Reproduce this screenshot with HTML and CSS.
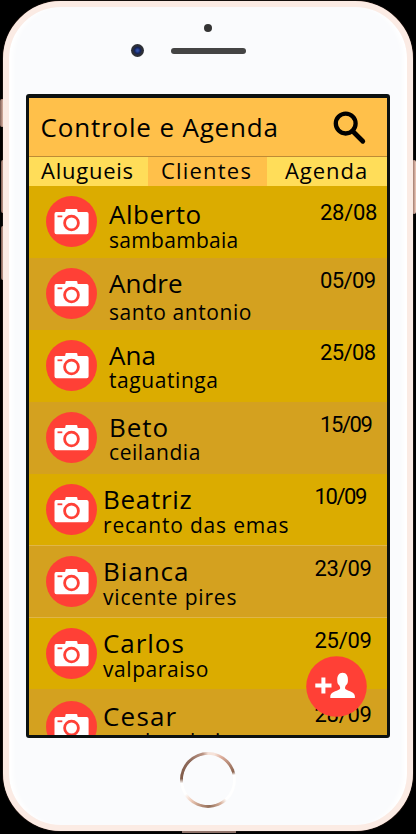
FILE: index.html
```html
<!DOCTYPE html>
<html lang="pt-BR">
<head>
<meta charset="utf-8">
<title>Controle e Agenda</title>
<link rel="stylesheet" href="styles.css">
</head>
<body>
<svg class="defs" width="0" height="0" aria-hidden="true">
  <symbol id="camera" viewBox="0 0 51 51">
    <circle cx="25.5" cy="25.5" r="25.5" fill="#ff4036"/>
    <path d="M10.2 16h8.300q.8 0 .9-1v-1q.1-1 1-1h10q.9 0 1 1v1q.1 1 .9 1h8.300q2 0 2 2v18.200q0 2-2 2H10.500q-2 0-2-2V18q0-2 1.700-2Z" fill="#fff"/>
    <circle cx="25.500" cy="27" r="6.900" fill="#fff" stroke="#ff4036" stroke-width="2.800"/>
    <path d="M11.500 20.300h4.800" stroke="#ff4036" stroke-width="1.800"/>
  </symbol>
</svg>
<div class="phone">
  <i class="side mute"></i><i class="side up"></i><i class="side down"></i><i class="side power"></i><i class="dock"></i>
  <div class="body">
    <i class="antenna tl"></i><i class="antenna tr"></i><i class="antenna bl"></i><i class="antenna br"></i>
    <div class="forehead">
      <i class="sensor"></i>
      <div class="earpiece"><i class="lens"></i><i class="speaker"></i></div>
    </div>
    <main class="screen">
      <header class="bar">
        <h1>Controle e Agenda</h1>
        <svg class="search" viewBox="0 0 34 34"><circle cx="12.700" cy="12.600" r="9.900" fill="none" stroke="#000" stroke-width="4.300"/><path d="m19.500 20 10.300 10.200" stroke="#000" stroke-width="4.800" stroke-linecap="round"/></svg>
      </header>
      <nav class="tabs">
        <a class="tab one">Alugueis</a><a class="tab two">Clientes</a><a class="tab three">Agenda</a>
      </nav>
      <ul class="list">
        <li class="row first"><svg class="avatar"><use href="#camera"/></svg><div class="info"><b class="s5">Alberto</b><small class="s3">sambambaia</small></div><time class="d3">28/08</time></li>
        <li class="row second"><svg class="avatar"><use href="#camera"/></svg><div class="info"><b>Andre</b><small class="s6">santo antonio</small></div><time class="d6">05/09</time></li>
        <li class="row"><svg class="avatar"><use href="#camera"/></svg><div class="info"><b>Ana</b><small class="s6">taguatinga</small></div><time class="d6">25/08</time></li>
        <li class="row"><svg class="avatar"><use href="#camera"/></svg><div class="info"><b class="s9">Beto</b><small class="s6">ceilandia</small></div><time class="d15">15/09</time></li>
        <li class="row near"><svg class="avatar"><use href="#camera"/></svg><div class="info"><b class="s7">Beatriz</b><small class="s8">recanto das emas</small></div><time class="d15">10/09</time></li>
        <li class="row near"><svg class="avatar"><use href="#camera"/></svg><div class="info"><b class="s9">Bianca</b><small class="s8">vicente pires</small></div><time class="d3">23/09</time></li>
        <li class="row near"><svg class="avatar"><use href="#camera"/></svg><div class="info"><b class="s9">Carlos</b><small class="s6">valparaiso</small></div><time class="d3">25/09</time></li>
        <li class="row near last"><svg class="avatar"><use href="#camera"/></svg><div class="info"><b class="s12">Cesar</b><small class="s3">sambambaia</small></div><time class="d3">28/09</time></li>
      </ul>
      <svg class="add" viewBox="0 0 61 61"><circle cx="30.500" cy="30.500" r="30.300" fill="#ff4036"/><path d="M9.300 29.500h16.200M17.400 21.500v16" stroke="#fff" stroke-width="4"/><path d="M24.300 42v-1.500c0-4.500 6-5 9.300-7.200 1-.7.500-2.500-.4-4-1.300-.6-2-2.600-1.900-4.200-.5-5.200 1.600-8.300 5.300-8.300s5.800 3.100 5.300 8.300c0 1.600-.7 3.600-2 4.200-.9 1.500-1.300 3.300-.3 4 3.400 2.200 9.300 2.700 9.300 7.200V42Z" fill="#fff"/></svg>
    </main>
    <div class="chin"><i class="home"></i></div>
  </div>
</div>
</body>
</html>
```

FILE: styles.css
```css
* { box-sizing: border-box; }
body { margin: 0; background: #000; color: #000; font-family: "Open Sans", sans-serif; }
.defs { position: absolute; }
.phone { position: relative; width: 416px; height: 834px; padding: 1px 3px 3px; overflow: hidden; }
.body { position: relative; height: 830px; border: 6px solid #fbebe4; border-radius: 58px; background: #fafbfd; box-shadow: inset 7px 0 5px -3px #fff, inset -7px 0 5px -3px #fff, 0 0 1px #c99684; overflow: hidden; }
.side { position: absolute; width: 4px; background: linear-gradient(90deg, #805e54, #f3cdbd); border-radius: 2px; }
.mute { left: 0; top: 99px; height: 28px; }
.up { left: 1px; top: 160px; height: 53px; }
.down { left: 1px; top: 226px; height: 54px; }
.power { right: 0; top: 160px; height: 54px; }
.dock { position: absolute; left: 182px; bottom: 1px; width: 54px; height: 3px; background: #8b7068; }
.antenna { position: absolute; width: 5px; height: 12px; background: #e2c0b0; }
.tl { left: -6px; top: 53px; }
.tr { right: -6px; top: 53px; }
.bl { left: -6px; top: 753px; }
.br { right: -6px; top: 753px; }
.forehead { height: 87px; padding: 17px 0 0 195px; }
.sensor { display: block; width: 8px; height: 8px; border-radius: 50%; background: #343434; }
.earpiece { display: flex; align-items: center; gap: 27px; height: 13px; margin: 12px 0 0 -73px; }
.lens { flex: none; width: 13px; height: 13px; border-radius: 50%; background: radial-gradient(circle, #3151aa 0 8%, #14235b 32%, #2b2e38 48%, #333 100%); }
.speaker { flex: none; width: 75px; height: 6px; border-radius: 3px; background: #444; }
.screen { position: relative; width: 364px; height: 644px; margin-left: 17px; border: 3px solid #0c1111; border-top-width: 4px; border-radius: 3px; background: #dbac00; overflow: hidden; }
.bar { display: flex; justify-content: space-between; height: 59px; padding: 0 20px 0 11.500px; background: #ffc04a; border-bottom: 1px solid #be8b35; }
h1 { margin: 0; font-size: 26px; line-height: 58px; font-weight: 400; letter-spacing: .83px; white-space: nowrap; }
.search { width: 34px; height: 34px; margin-top: 13px; }
.tabs { display: grid; grid-template-columns: 119px 119px 1fr; height: 29px; font-size: 22px; line-height: 27px; letter-spacing: .75px; background: #ffc04a; white-space: nowrap; }
.tab { padding-left: 12px; }
.one, .three { background: #ffdd59; }
.two { padding-left: 13px; letter-spacing: 1.200px; }
.three { padding-left: 18px; letter-spacing: .95px; }
.list { list-style: none; margin: 0; padding: 0; }
.row { display: flex; height: 71.900px; padding-left: 17px; background: #dbac00; }
.row:nth-child(even) { background: #d4a11f; }
.row.near:nth-child(n+6):not(.last) { box-shadow: inset 0 1px #e0b548; }
.avatar { flex: none; width: 51px; height: 51px; margin: 10.200px 12px 0 0; }
.near .avatar { margin-right: 6px; }
.last .avatar { margin-top: 12px; }
.info { width: 211px; padding-top: 12px; white-space: nowrap; }
.near .info { padding-top: 12.500px; }
.first .info { padding-top: 15px; }
.second .info { padding-top: 12.200px; }
.last .info { padding-top: 13.500px; }
b { display: block; font-size: 26px; line-height: 26px; font-weight: 400; }
small { display: block; margin-top: 1.700px; font-size: 21px; line-height: 23.500px; }
.second small { margin-top: 5px; }
.s3 { letter-spacing: .3px; }
.s5 { letter-spacing: .5px; }
.s6 { letter-spacing: .57px; }
.s7 { letter-spacing: .7px; }
.s8 { letter-spacing: .8px; }
.s9 { letter-spacing: .95px; }
.s12 { letter-spacing: 1.200px; }
time { padding-top: 11px; font-family: Roboto, sans-serif; font-size: 22px; line-height: 24px; }
.second time { padding-top: 11.500px; }
.first time { padding-top: 14.500px; }
.d3 { letter-spacing: -.3px; }
.d6 { letter-spacing: -.6px; }
.d15 { letter-spacing: -1.400px; }
.near time { padding-top: 11.500px; margin-left: .5px; }
.last time { padding-top: 14px; }
.add { position: absolute; left: 277px; top: 558px; width: 61px; height: 61px; }
.chin { display: flex; justify-content: center; padding-top: 14px; }
.home { width: 56px; height: 56px; border-radius: 50%; background: radial-gradient(circle closest-side, #fafbfd 0 88%, transparent 91%), conic-gradient(#f6e3da 0 4%, #e0b19f 8%, #8d6551 20%, #fff 22% 38%, #d9b29d 42%, #93705b 49%, #b58d77 54%, #efcdbb 61%, #fff 66% 73%, #805b49 76%, #8f6b5c 88%, #bb9585 97%, #f6e3da); }
```
